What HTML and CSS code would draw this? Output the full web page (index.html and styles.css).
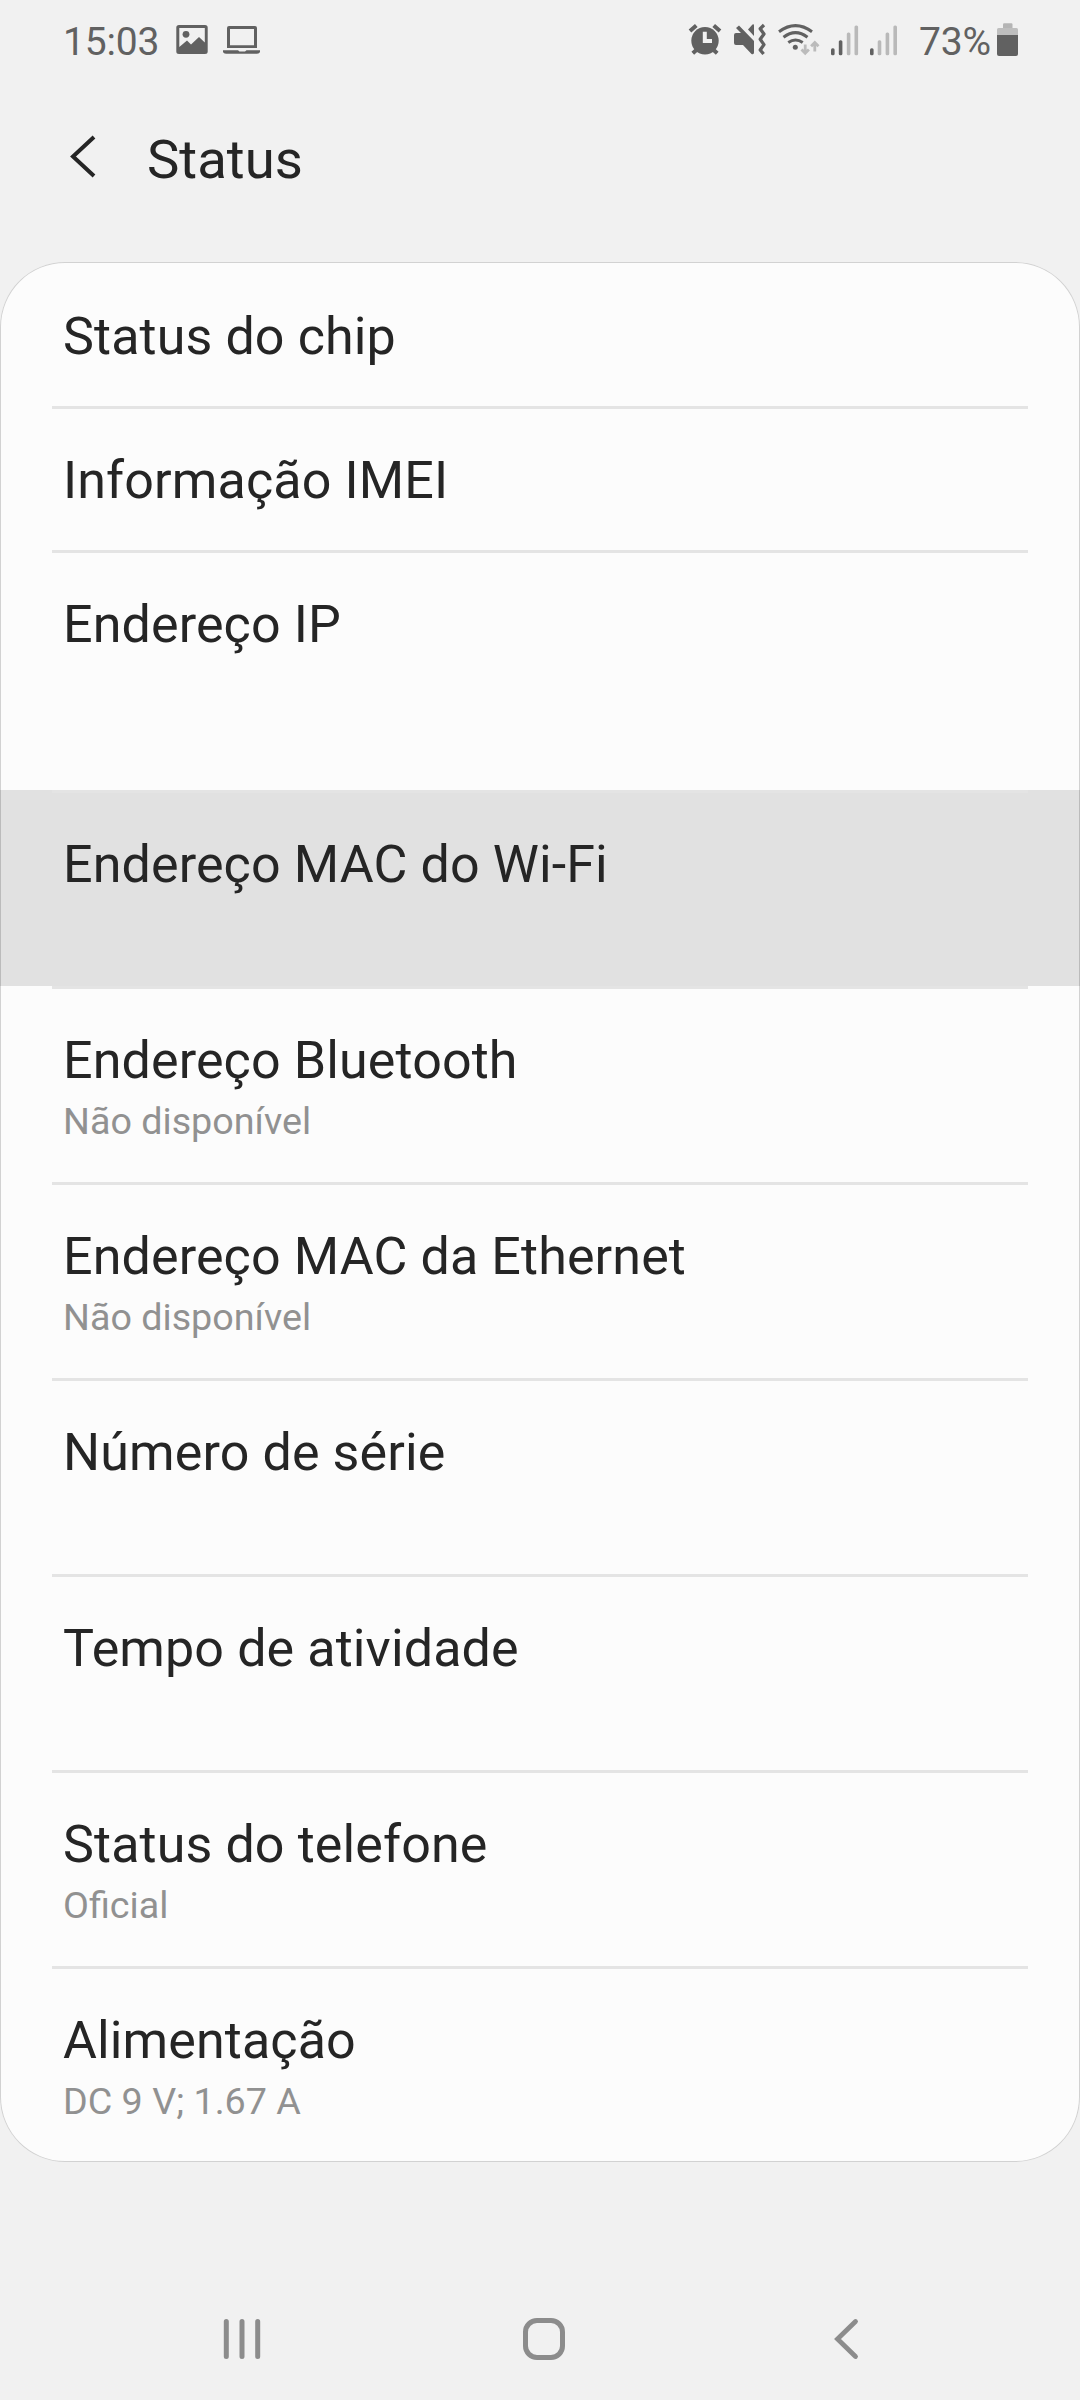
FILE: index.html
```html
<!DOCTYPE html>
<html lang="pt-BR">
<head>
<meta charset="utf-8">
<title>Status</title>
<link rel="stylesheet" href="styles.css">
</head>
<body>
<div class="screen">
  <div class="statusbar">
    <span class="clock">15:03</span>
    <svg class="notifications" viewBox="176 0 86 80" width="86" height="80">
      <path fill="#616161" fill-rule="evenodd" d="M179 25H205Q207.700 25 207.700 27.500V51.500Q207.700 54 205 54H179Q176.300 54 176.300 51.500V27.500Q176.300 25 179 25ZM179.300 28V47L187 40.500L191 44.500L199 37L204.800 42.500V28Z"/>
      <circle cx="186" cy="34.300" r="3.400" fill="#616161"/>
      <path fill="#616161" fill-rule="evenodd" d="M229 26H255Q257 26 257 28V48H227V28Q227 26 229 26ZM230 29V45.300H254V29Z"/>
      <path fill="#616161" d="M223 50.300H238L239.500 51.500H245L246.500 50.300H260V52Q259.500 53.700 257 53.700H226Q223.500 53.700 223 52Z"/>
    </svg>
    <svg class="indicators" viewBox="688 0 212 80" width="212" height="80">
      <circle cx="705" cy="40.700" r="13.700" fill="#616161"/>
      <path d="M704.800 31.700V41H712" fill="none" stroke="#f1f1f1" stroke-width="4"/>
      <path d="M690 31L696.300 25.500M720 31L713.700 25.500M692.800 53.300L698 48.500M717.200 53.300L712 48.500" fill="none" stroke="#616161" stroke-width="4"/>
      <path fill="#616161" d="M736 28L739 25.500L754 41V52.500Q754 55 751.500 54L743 45H736Q734 45 734 43V35Q734 33 736 33H741Z"/>
      <path fill="#616161" d="M748 29.500L752.500 24.500Q754 23.500 754 25.500V36Z"/>
      <path d="M764 25L760.200 28.700L764 34L760.200 39.300L764 44.600L760.200 50L763.600 54" fill="none" stroke="#616161" stroke-width="3.300" stroke-linejoin="round"/>
      <g fill="none" stroke="#616161" stroke-width="3">
        <path d="M779 31.800Q795.500 19.500 812 31.800"/>
        <path d="M783.500 37.200Q795.500 28 807.500 37.200"/>
        <path d="M788.300 42.500Q795.500 37.500 802.700 42.500"/>
      </g>
      <circle cx="795.300" cy="47.300" r="2.500" fill="#616161"/>
      <path d="M805.200 44.500V53M801.500 49.500L805.200 53.200L808.900 49.500M814.800 51.500V43M811.100 46.300L814.800 42.600L818.500 46.300" fill="none" stroke="#bbb" stroke-width="2.800"/>
      <g fill="#616161">
        <rect x="831" y="48.300" width="3.600" height="6.900" rx="1.500"/>
        <rect x="838.800" y="40.300" width="3.600" height="14.900" rx="1.500"/>
        <rect x="870" y="48.300" width="3.600" height="6.900" rx="1.500"/>
      </g>
      <g fill="#b9b9b9">
        <rect x="846.800" y="32.500" width="3.600" height="22.700" rx="1.500"/>
        <rect x="854.500" y="25.500" width="3.600" height="29.700" rx="1.500"/>
        <rect x="877.700" y="40.300" width="3.600" height="14.900" rx="1.500"/>
        <rect x="885.600" y="32.500" width="3.600" height="22.700" rx="1.500"/>
        <rect x="893.400" y="25.500" width="3.600" height="29.700" rx="1.500"/>
      </g>
    </svg>
    <span class="percent">73%</span>
    <svg class="battery" viewBox="996 0 24 80" width="24" height="80">
      <path fill="#b5b5b5" d="M1003 28V24.500Q1003 23.300 1004.200 23.300H1011.300Q1012.500 23.300 1012.500 24.500V28Z"/>
      <rect x="997" y="28" width="21" height="12" rx="1.500" fill="#bebebe"/>
      <path fill="#616161" d="M997 35H1018V54Q1018 56 1016 56H999Q997 56 997 54Z"/>
    </svg>
  </div>

  <header class="appbar">
    <svg class="back" viewBox="0 0 26 44" width="26" height="44">
      <path d="M24 2L3 21.500L24 41" fill="none" stroke="#252525" stroke-width="4"/>
    </svg>
    <h1 class="title">Status</h1>
  </header>

  <ul class="card">
    <li class="row short">Status do chip</li>
    <li class="row short">Informação IMEI</li>
    <li class="row tall">Endereço IP</li>
    <li class="row pressed">Endereço MAC do Wi-Fi</li>
    <li class="row">Endereço Bluetooth<span class="sub">Não disponível</span></li>
    <li class="row">Endereço MAC da Ethernet<span class="sub">Não disponível</span></li>
    <li class="row">Número de série</li>
    <li class="row">Tempo de atividade</li>
    <li class="row">Status do telefone<span class="sub">Oficial</span></li>
    <li class="row">Alimentação<span class="sub">DC 9 V; 1.67 A</span></li>
  </ul>

  <nav class="navbar">
    <svg class="recents" viewBox="0 0 38 44" width="38" height="44">
      <path d="M3.300 4.500V39.500M19 4.500V39.500M34.700 4.500V39.500" stroke="#8c8c8c" stroke-width="5" stroke-linecap="round"/>
    </svg>
    <svg class="home" viewBox="0 0 44 44" width="44" height="44">
      <rect x="3.500" y="3.500" width="37" height="37" rx="11.500" fill="none" stroke="#8c8c8c" stroke-width="5"/>
    </svg>
    <svg class="navback" viewBox="0 0 26 44" width="26" height="44">
      <path d="M22.500 4.500L4.500 22L22.500 39.500" fill="none" stroke="#8c8c8c" stroke-width="4.800" stroke-linecap="round"/>
    </svg>
  </nav>
</div>
</body>
</html>
```
FILE: styles.css
```css
* {
  box-sizing: border-box;
}

body {
  margin: 0;
  background: #f1f1f1;
  color: #252525;
  font-family: Roboto, "Noto Sans", sans-serif;
}

.screen {
  display: flex;
  flex-direction: column;
  width: 1080px;
  height: 2400px;
  overflow: hidden;
}

.statusbar {
  display: flex;
  height: 80px;
  padding-left: 63px;
  color: #616161;
  font-size: 39px;
  line-height: 84px;
  letter-spacing: -0.2px;
  white-space: nowrap;
}

.statusbar svg {
  flex: none;
}

.clock {
  width: 113px;
}

.indicators {
  margin-left: 426px;
}

.percent {
  width: 96px;
  padding-left: 19px;
}

.appbar {
  display: flex;
  height: 182px;
  padding: 55px 0 0 70px;
}

.title {
  margin: 0;
  padding-left: 51px;
  font-size: 54.5px;
  font-weight: 400;
  line-height: 49px;
}

.card {
  margin: 0;
  padding: 0;
  list-style: none;
  height: 1900px;
  border-radius: 65px;
  background: #fcfcfc;
  box-shadow: inset 0 0 0 1px #d2d2d2;
}

.row {
  height: 196px;
  padding: 45px 63px 0;
  font-size: 52px;
  line-height: 60px;
  letter-spacing: 0.12px;
  white-space: nowrap;
  background: linear-gradient(#e4e4e4, #e4e4e4) 52px 0 / 976px 3px no-repeat;
}

.row:first-child {
  background: none;
}

.short {
  height: 144px;
}

.tall {
  height: 240px;
}

.pressed {
  background-color: rgba(0, 0, 0, 0.106);
}

.sub {
  display: block;
  margin-top: 7px;
  color: #919191;
  font-size: 37.7px;
  line-height: 46px;
  letter-spacing: 0;
}

.navbar {
  display: flex;
  padding: 155px 0 0 223px;
}

.recents {
  margin-right: 261px;
}

.home {
  margin-right: 267px;
}
```
